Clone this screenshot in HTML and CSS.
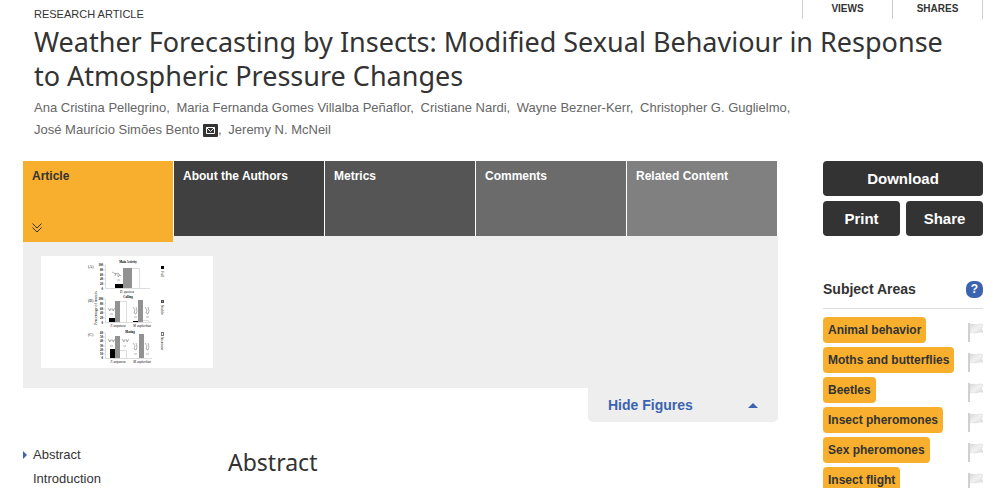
FILE: index.html
```html
<!DOCTYPE html>
<html lang="en">
<head>
    <meta charset="UTF-8">
    <meta name="viewport" content="width=device-width, initial-scale=1.0">
    <title>Weather Forecasting by Insects</title>
    <link rel="stylesheet" href="styles.css">
</head>
<body>
    <svg class="sprite" width="0" height="0" aria-hidden="true">
        <defs>
            <linearGradient id="flag-fill" x1="0" y1="0" x2="1" y2="1">
                <stop offset="0" stop-color="#dadada"/>
                <stop offset="0.5" stop-color="#f1f1f1"/>
                <stop offset="1" stop-color="#d8d8d8"/>
            </linearGradient>
        </defs>
        <symbol id="flag" viewBox="0 0 15 19">
            <path d="M2 1.500C5 0 7 2.500 9.500 1.500C11.500 .8 13 .8 15 1.500L13.500 5.500L15 9.500C12.500 8.800 11 9 9 9.800C6.500 10.600 5 8.800 2 10Z" fill="url(#flag-fill)" stroke="#d6d6d6" stroke-width=".5"/>
            <path d="M0 0h2v19h-2z" fill="#d0d0d0"/>
        </symbol>
    </svg>

    <header class="article-header">
        <div class="header-top">
            <p class="article-type">RESEARCH ARTICLE</p>
            <ul class="signposts">
                <li>VIEWS</li>
                <li>SHARES</li>
            </ul>
        </div>
        <h1>Weather Forecasting by Insects: Modified Sexual Behaviour in Response to Atmospheric Pressure Changes</h1>
        <ul class="authors">
            <li>Ana Cristina Pellegrino,</li>
            <li>Maria Fernanda Gomes Villalba Peñaflor,</li>
            <li>Cristiane Nardi,</li>
            <li>Wayne Bezner-Kerr,</li>
            <li>Christopher G. Guglielmo,</li>
            <li>José Maurício Simões Bento
                <svg class="mail" viewBox="0 0 15 13" aria-label="Email"><rect width="15" height="13" rx="1" fill="#333"/><path d="M3.500 3.500h8v6h-8z M3.500 3.500l4 4l4-4" fill="none" stroke="#fff"/></svg>,</li>
            <li>Jeremy N. McNeil</li>
        </ul>
    </header>

    <div class="columns">
        <main>
            <nav class="tabs">
                <a href="#article" class="tab active">Article
                    <svg class="chevrons" viewBox="0 0 10 10" aria-hidden="true"><path d="M.5 .5l4.500 4.500l4.500-4.500M.5 4.500l4.500 4.500l4.500-4.500" fill="none" stroke="#333"/></svg>
                </a>
                <a href="#authors" class="tab tab-authors">About the Authors</a>
                <a href="#metrics" class="tab tab-metrics">Metrics</a>
                <a href="#comments" class="tab tab-comments">Comments</a>
                <a href="#related" class="tab tab-related">Related Content</a>
            </nav>

            <div class="figures">
                <a href="#figure1" class="thumb">
                    <svg viewBox="0 0 172 112" role="img" aria-label="Figure 1">
                        <g class="axis">
                            <path d="M64.500 9v23.500H109M64.500 43v23.500H111M64.500 77v25.500H111"/>
                            <path d="M62 10h2M62 14h2M62 19h2M62 23h2M62 28h2M62 43h2M62 48h2M62 53h2M62 57h2M62 62h2M62 77h2M62 81h2M62 85h2M62 90h2M62 94h2M62 98h2"/>
                        </g>
                        <g class="ticks">
                            <text x="62" y="10">100</text><text x="62" y="15">80</text><text x="62" y="20">60</text><text x="62" y="24">40</text><text x="62" y="29">20</text><text x="62" y="34">0</text>
                            <text x="62" y="44">100</text><text x="62" y="49">80</text><text x="62" y="54">60</text><text x="62" y="58">40</text><text x="62" y="63">20</text><text x="62" y="68">0</text>
                            <text x="62" y="78">60</text><text x="62" y="82">50</text><text x="62" y="86">40</text><text x="62" y="91">30</text><text x="62" y="95">20</text><text x="62" y="99">10</text><text x="62" y="103">0</text>
                        </g>
                        <path class="bar-full" d="M74 28h8v4h-8zM68 62h6v4h-6zM92 65h5v1h-5zM69 93h5v9h-5z"/>
                        <path class="bar-stable" d="M82 12h9v20h-9zM74 45h5v21h-5zM97 44h5v22h-5zM74 80h5v22h-5zM98 78h5v24h-5z"/>
                        <path class="bar-increase" d="M91 12.500h7.500V32M79 45.500h6.500V66M102 64.500h5.500V66M79 94.500h6.500V102"/>
                        <g class="title">
                            <text x="87" y="7">Main Activity</text>
                            <text x="87" y="42">Calling</text>
                            <text x="89" y="77">Mating</text>
                        </g>
                        <g class="species">
                            <text x="86" y="37">D. speciosa</text>
                            <text x="77" y="71">P. unipuncta</text>
                            <text x="101" y="71">M. euphorbiae</text>
                            <text x="77" y="107">P. unipuncta</text>
                            <text x="101" y="107">M. euphorbiae</text>
                        </g>
                        <g class="panel">
                            <text x="47" y="12">(A)</text>
                            <text x="47" y="46">(B)</text>
                            <text x="47" y="80">(C)</text>
                            <text transform="translate(56 69) rotate(-90)">Percentage of insects</text>
                            <text transform="translate(120 15) rotate(90)">Full</text>
                            <text transform="translate(120 49) rotate(90)">Stable</text>
                            <text transform="translate(120 81) rotate(90)">Increase</text>
                        </g>
                        <path class="insects" d="M71 16l4 2l2-1l3 3M75 17l-1 3M77 18v3M79 19l-2 2M67 52l2 3v-2h3v2l2-3M67 83l2 3v-2h3v2l2-3M81 83l2 3v-2h3v2l2-3M92 51l2 3l-1 3l2 1l1-3l-1-4M104 51l2 3l-1 3l2 1l1-3l-1-4M92 87l2 3l-1 3l2 1l1-3l-1-4M104 87l2 3l-1 3l2 1l1-3l-1-4M76 24h3M69 58h3M93 61h3M105 61h3M69 90h3M82 90h3M93 98h3M105 98h3"/>
                        <rect x="120" y="10" width="3" height="3"/>
                        <rect x="120.500" y="44.500" width="2" height="2" fill="#888" stroke="#555"/>
                        <rect x="120.500" y="76.500" width="2" height="3" fill="#fff" stroke="#777"/>
                    </svg>
                </a>
            </div>
            <button type="button" class="toggle-figures">Hide Figures <span class="arrow-up"></span></button>

            <div class="article-body">
                <nav class="contents">
                    <a href="#abstract" class="current">Abstract</a>
                    <a href="#introduction">Introduction</a>
                </nav>
                <section class="abstract" id="abstract">
                    <h2>Abstract</h2>
                </section>
            </div>
        </main>

        <aside>
            <div class="actions">
                <button type="button" class="download">Download</button>
                <button type="button">Print</button>
                <button type="button">Share</button>
            </div>

            <div class="subjects-head">
                <h3>Subject Areas</h3>
                <a href="#help" class="help">?</a>
            </div>
            <ul class="subjects">
                <li><a href="#s1">Animal behavior</a><svg class="flag"><use href="#flag"/></svg></li>
                <li><a href="#s2">Moths and butterflies</a><svg class="flag"><use href="#flag"/></svg></li>
                <li><a href="#s3">Beetles</a><svg class="flag"><use href="#flag"/></svg></li>
                <li><a href="#s4">Insect pheromones</a><svg class="flag"><use href="#flag"/></svg></li>
                <li><a href="#s5">Sex pheromones</a><svg class="flag"><use href="#flag"/></svg></li>
                <li><a href="#s6">Insect flight</a><svg class="flag"><use href="#flag"/></svg></li>
            </ul>
        </aside>
    </div>
</body>
</html>
```

FILE: styles.css
```css
:root {
    --text: #333;
    --orange: #f8af2d;
    --blue: #3c63af;
    --panel: #eee;
}

* {
    box-sizing: border-box;
}

html {
    overflow: hidden;
}

body {
    margin: 0;
    padding: 0 23px;
    background: #fff;
    color: var(--text);
    font-family: "Liberation Sans", Arial, sans-serif;
    font-size: 13px;
}

ul {
    list-style: none;
    margin: 0;
    padding: 0;
}

h1, h2, h3, p {
    margin: 0;
}

a {
    color: inherit;
    text-decoration: none;
}

button {
    font-family: inherit;
    border: none;
    cursor: pointer;
}

/* zero size instead of display: none, so the flag gradient still paints */
.sprite {
    position: absolute;
}

/* header */
.article-header {
    padding-left: 11px;
}

.header-top {
    display: flex;
    justify-content: space-between;
    height: 25px;
}

.article-type {
    padding-top: 8px;
    font-size: 11px;
    line-height: 13px;
}

.signposts {
    display: flex;
    height: 19px;
    border-right: 1px solid #ccc;
}

.signposts li {
    width: 90px;
    padding-top: 2px;
    border-left: 1px solid #ccc;
    font-size: 10px;
    font-weight: bold;
    line-height: 13px;
    text-align: center;
}

h1, h2 {
    font-family: "Noto Sans", sans-serif;
    font-weight: normal;
}

h1 {
    max-width: 96%;
    font-size: 27px;
    line-height: 34px;
}

.authors {
    max-width: 82%;
    padding-top: 4px;
    color: #666;
    line-height: 22px;
}

.authors li {
    display: inline;
    margin-right: 3px;
}

.mail {
    width: 15px;
    height: 13px;
    vertical-align: -3px;
}

/* two columns */
.columns {
    display: grid;
    grid-template-columns: 1fr 160px;
    gap: 45px;
    padding-top: 20px;
}

.tabs {
    display: grid;
    grid-template-columns: repeat(5, 1fr);
    grid-template-rows: 75px;
    gap: 1px;
    padding-right: 1px;
}

.tab {
    padding: 8px 9px;
    color: #fff;
    font-size: 12px;
    font-weight: bold;
    line-height: 14px;
}

/* the open tab hangs over the panel below */
.tab.active {
    display: flex;
    flex-direction: column;
    justify-content: space-between;
    margin-bottom: -6px;
    padding-bottom: 9px;
    background: var(--orange);
    color: var(--text);
    z-index: 1;
}

.chevrons {
    width: 10px;
    height: 10px;
}

.tab-authors {
    background: #404040;
}

.tab-metrics {
    background: #555;
}

.tab-comments {
    background: #6b6b6b;
}

.tab-related {
    background: #808080;
}

.figures {
    padding: 20px 18px;
    background: var(--panel);
}

.thumb {
    display: block;
    width: 172px;
    height: 112px;
    background: #fff;
}

.thumb svg {
    display: block;
    font-family: "Liberation Serif", serif;
}

.axis {
    fill: none;
    stroke: #bbb;
    stroke-width: .5;
}

.ticks {
    font-size: 3px;
    font-weight: bold;
    text-anchor: end;
}

.bar-stable {
    fill: #929292;
}

.bar-increase {
    fill: none;
    stroke: #bbb;
    stroke-width: .5;
}

.title {
    font-size: 3px;
    font-weight: bold;
    text-anchor: middle;
}

.species {
    font-size: 3px;
    font-style: italic;
    text-anchor: middle;
}

.panel {
    font-size: 4px;
}

.insects {
    fill: none;
    stroke: #666;
    stroke-width: .5;
}

.toggle-figures {
    display: flex;
    align-items: center;
    justify-content: space-between;
    width: 190px;
    height: 34px;
    margin-left: auto;
    padding: 0 20px;
    border-radius: 0 0 5px 5px;
    background: var(--panel);
    color: var(--blue);
    font-size: 14px;
    font-weight: bold;
}

.arrow-up {
    border: 5px solid transparent;
    border-top: none;
    border-bottom-color: var(--blue);
}

.article-body {
    display: grid;
    grid-template-columns: 205px 1fr;
    padding-top: 21px;
}

.contents a {
    display: block;
    padding-left: 10px;
    line-height: 24px;
}

.contents .current {
    display: flex;
    align-items: center;
    gap: 6px;
    padding-left: 0;
}

.contents .current::before {
    content: "";
    border: 4px solid transparent;
    border-left-color: var(--blue);
    border-right: none;
}

h2 {
    padding-top: 3px;
    font-size: 23px;
    line-height: 32px;
}

/* sidebar */
.actions {
    display: grid;
    grid-template-columns: 1fr 1fr;
    gap: 5px 6px;
}

.actions button {
    height: 35px;
    padding: 0;
    border-radius: 4px;
    background: var(--text);
    color: #fff;
    font-size: 15px;
    font-weight: bold;
}

.actions .download {
    grid-column: 1 / -1;
}

.subjects-head {
    display: flex;
    align-items: center;
    justify-content: space-between;
    margin-top: 44px;
    padding-bottom: 10px;
    border-bottom: 1px solid #ddd;
}

h3 {
    font-size: 14px;
    line-height: 18px;
}

.help {
    width: 17px;
    height: 17px;
    border-radius: 7px;
    background: var(--blue);
    color: #fff;
    font-size: 12px;
    font-weight: bold;
    line-height: 17px;
    text-align: center;
}

.subjects {
    padding-top: 8px;
}

.subjects li {
    display: flex;
    align-items: flex-start;
    justify-content: space-between;
    height: 30px;
}

.subjects a {
    padding: 0 5px;
    border-radius: 4px;
    background: var(--orange);
    font-size: 12px;
    font-weight: bold;
    line-height: 26px;
}

.flag {
    width: 15px;
    height: 19px;
    margin-top: 6px;
}
```
